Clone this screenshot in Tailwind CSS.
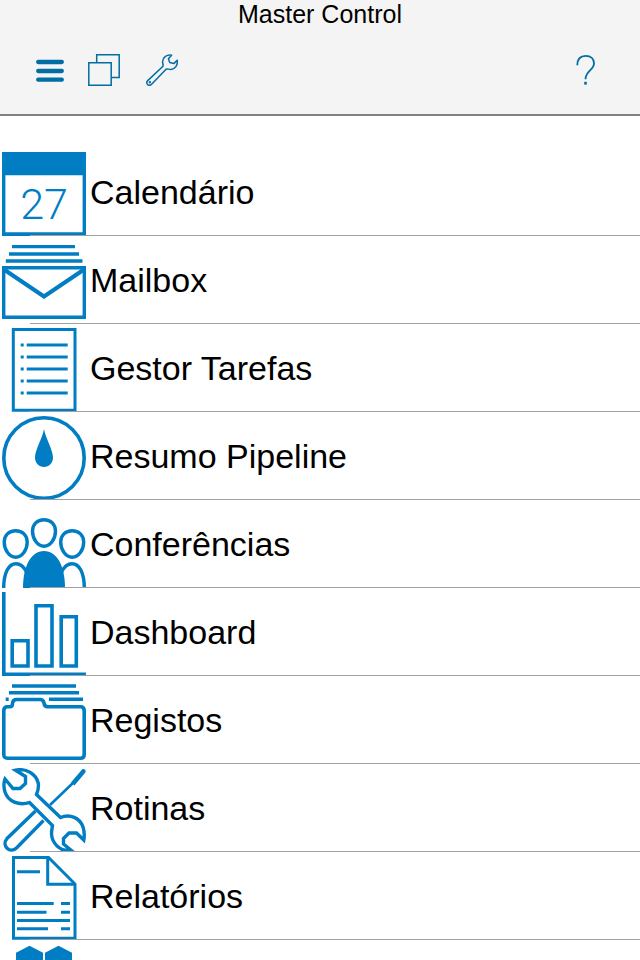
<!DOCTYPE html>
<html lang="pt">
<head>
    <meta charset="UTF-8">
    <meta name="viewport" content="width=device-width, initial-scale=1.0">
    <title>Master Control</title>
    <script src="https://cdn.jsdelivr.net/npm/@tailwindcss/browser@4"></script>
</head>
<body class="bg-white text-black font-['Liberation_Sans',Arial,sans-serif] h-screen flex flex-col overflow-hidden">
    <header class="shrink-0 bg-[#f4f4f4] border-b-2 border-[#808080]">
        <h1 class="text-center text-[25px] leading-7">Master Control</h1>
        <div class="flex items-center justify-between pt-[26px] pb-7 pl-9 pr-[38px] text-[#006da3]">
            <div class="flex items-center gap-6">
                <button type="button" aria-label="Menu">
                    <svg class="block w-7 h-8" viewBox="0 0 28 32" fill="none" stroke="currentColor" stroke-width="4.3" stroke-linecap="round">
                        <path d="M2.2 8H25.8M2.2 17H25.8M2.2 25.7H25.8"/>
                    </svg>
                </button>
                <button type="button" aria-label="Janelas">
                    <svg class="block w-8 h-8" viewBox="0 0 32 32" fill="none" stroke="currentColor" stroke-width="1.5">
                        <path d="M8.7 8.5V.8H31.2V23.5H23.5"/>
                        <path d="M.8 8.8H23.2V31.2H.8Z"/>
                    </svg>
                </button>
                <button type="button" aria-label="Ferramentas">
                    <svg class="block w-[34px] h-8" viewBox="-2 0 34 32" fill="none" stroke="currentColor" stroke-width="1.5" stroke-linejoin="round">
                        <path d="M25.6 1.2C21 .2 16.8 3.500 16.600 7.500C16.500 9.500 17.400 11 17 12.200L1.700 26.600C-.7 29.200 2.600 33 5.600 30.300L20.300 15.100C21.300 14.400 22.500 15.600 25 15.500C29 15.300 32 11.200 31.200 6.200L27.800 9.600L23.800 8.600L22.400 4.800Z"/>
                        <circle cx="3.900" cy="28.200" r=".5"/>
                    </svg>
                </button>
            </div>
            <button type="button" aria-label="Ajuda">
                <svg class="block w-8 h-8" viewBox="0 0 32 32" fill="none" stroke="currentColor" stroke-width="1.8">
                    <path d="M7.300 11.300C7.300 5 10.500 1.900 15.800 1.900C20.800 1.900 24 4.800 24 9.300C24 16.500 15.500 16.500 15.500 25.300"/>
                    <path d="M15.500 27.800V30.600" stroke-width="2.600"/>
                </svg>
            </button>
        </div>
    </header>

    <main class="flex-1 min-h-0 overflow-hidden pt-8">
        <ul class="text-[34px] leading-[40px]">
            <li class="relative after:absolute after:left-[30px] after:right-0 after:bottom-0 after:h-px after:bg-[#a0a0a0]">
                <a href="#calendario" class="flex items-center gap-1 h-[88px] pl-0.5">
                    <svg class="w-[84px] h-[84px] mt-1 text-[#007dc3]" viewBox="0 0 84 84" fill="currentColor">
                        <path fill-rule="evenodd" d="M0 0H84V84H0ZM3.400 23.300V80.300H80.600V23.300Z"/>
                        <text x="42" y="66.700" text-anchor="middle" class="font-[Roboto,sans-serif] font-light text-[43px]">27</text>
                    </svg>
                    <span>Calendário</span>
                </a>
            </li>
            <li class="relative after:absolute after:left-[30px] after:right-0 after:bottom-0 after:h-px after:bg-[#a0a0a0]">
                <a href="#mailbox" class="flex items-center gap-1 h-[88px] pl-0.5">
                    <svg class="w-[84px] h-[84px] mt-1 text-[#007dc3]" viewBox="0 0 84 84" fill="none" stroke="currentColor" stroke-width="3.400">
                        <path d="M10 6.600H73M7 14H77M3.800 21H80.500"/>
                        <path d="M1.700 27.700H82.300V77.300H1.700Z"/>
                        <path d="M2 29.500L42 56.500L82 29.500" stroke-width="4"/>
                    </svg>
                    <span>Mailbox</span>
                </a>
            </li>
            <li class="relative after:absolute after:left-[30px] after:right-0 after:bottom-0 after:h-px after:bg-[#a0a0a0]">
                <a href="#tarefas" class="flex items-center gap-1 h-[88px] pl-0.5">
                    <svg class="w-[84px] h-[84px] mt-1 text-[#007dc3]" viewBox="0 0 84 84" fill="none" stroke="currentColor" stroke-width="3">
                        <path d="M11.300 1.600H73V82.300H11.300Z"/>
                        <path d="M18.700 17H21.700M18.700 29H21.700M18.700 41H21.700M18.700 53H21.700M18.700 65H21.700"/>
                        <path d="M24.700 17H65.700M24.700 29H65.700M24.700 41H65.700M24.700 53H65.700M24.700 65H65.700"/>
                    </svg>
                    <span>Gestor Tarefas</span>
                </a>
            </li>
            <li class="relative after:absolute after:left-[30px] after:right-0 after:bottom-0 after:h-px after:bg-[#a0a0a0]">
                <a href="#pipeline" class="flex items-center gap-1 h-[88px] pl-0.5">
                    <svg class="w-[84px] h-[84px] mt-1 text-[#007dc3]" viewBox="0 0 84 84" fill="currentColor">
                        <circle cx="42" cy="42" r="40.200" fill="none" stroke="currentColor" stroke-width="3.600"/>
                        <path d="M42 13C43.500 22 51 34 51 41.500C51 47 47 51 42 51S33 47 33 41.500C33 34 40.500 22 42 13Z"/>
                    </svg>
                    <span>Resumo Pipeline</span>
                </a>
            </li>
            <li class="relative after:absolute after:left-[30px] after:right-0 after:bottom-0 after:h-px after:bg-[#a0a0a0]">
                <a href="#conferencias" class="flex items-center gap-1 h-[88px] pl-0.5">
                    <svg class="w-[84px] h-[84px] mt-1 text-[#007dc3]" viewBox="0 0 84 84" fill="none" stroke="currentColor" stroke-width="3.400">
                        <path d="M42 15.700C48.800 15.700 53.500 20.500 53.500 27C53.500 35 48.500 42.200 42 42.200S30.500 35 30.500 27C30.500 20.500 35.200 15.700 42 15.700Z"/>
                        <path d="M13.700 26.700C20.500 26.700 25.200 31.500 25.200 38C25.200 46 20.200 53.200 13.700 53.200S2.200 46 2.200 38C2.200 31.500 6.900 26.700 13.700 26.700Z"/>
                        <path d="M70.200 26.700C77 26.700 81.700 31.500 81.700 38C81.700 46 76.700 53.200 70.200 53.200S58.700 46 58.700 38C58.700 31.500 63.400 26.700 70.200 26.700Z"/>
                        <path d="M1.700 84C1.700 69 6.500 59.700 14 59.700C18.500 59.700 22 63 24.500 68"/>
                        <path d="M82.300 84C82.300 69 77.500 59.700 70 59.700C65.500 59.700 62 63 59.500 68"/>
                        <path fill="currentColor" stroke="none" d="M21 84C21 62 29 47 42 47S63 62 63 84Z"/>
                    </svg>
                    <span>Conferências</span>
                </a>
            </li>
            <li class="relative after:absolute after:left-[30px] after:right-0 after:bottom-0 after:h-px after:bg-[#a0a0a0]">
                <a href="#dashboard" class="flex items-center gap-1 h-[88px] pl-0.5">
                    <svg class="w-[84px] h-[84px] mt-1 text-[#007dc3]" viewBox="0 0 84 84" fill="none" stroke="currentColor" stroke-width="3.600">
                        <path d="M1.800 0V82.200H84"/>
                        <path d="M10.200 48.800H26V74H10.200ZM34 13.800H50V74H34ZM59.200 24.800H74.300V74H59.200Z"/>
                    </svg>
                    <span>Dashboard</span>
                </a>
            </li>
            <li class="relative after:absolute after:left-[30px] after:right-0 after:bottom-0 after:h-px after:bg-[#a0a0a0]">
                <a href="#registos" class="flex items-center gap-1 h-[88px] pl-0.5">
                    <svg class="w-[84px] h-[84px] mt-1 text-[#007dc3]" viewBox="0 0 84 84" fill="none" stroke="currentColor" stroke-width="3.600">
                        <path d="M10 6H74M7 12.800H77M3.700 19.200H6.700M47 19.200H81"/>
                        <path d="M5.500 26.700H8C10 26.700 10.500 25.500 10.500 23.500C10.700 20.500 12 19.500 14.500 19.500H38C40.500 19.500 41.500 20.500 42 23C42.300 25.500 43 26.700 45.500 26.700H78.500C81 26.700 82.200 28 82.200 30.500V74.500C82.200 77 81 78.200 78.500 78.200H5.500C3 78.200 1.800 77 1.800 74.500V30.500C1.800 28 3 26.700 5.500 26.700Z"/>
                    </svg>
                    <span>Registos</span>
                </a>
            </li>
            <li class="relative after:absolute after:left-[30px] after:right-0 after:bottom-0 after:h-px after:bg-[#a0a0a0]">
                <a href="#rotinas" class="flex items-center gap-1 h-[88px] pl-0.5">
                    <svg class="w-[84px] h-[84px] mt-1 text-[#007dc3]" viewBox="0 0 84 84" fill="none" stroke="currentColor" stroke-width="3.400">
                        <path d="M48 37L72 14" stroke-width="2.600"/>
                        <path fill="currentColor" stroke="none" d="M69 14.500L80 1.500C82 .2 84.500 2 83.300 4.500L72.500 17.500Z"/>
                        <path d="M33.500 43L5 70.500C-1 78 8 86 14.500 80L41.500 52.500"/>
                        <path d="M13.500 2.200C24 -.2 34 6 36.200 15C37 19.500 36 23 34.500 26.500L58.500 49.500C68 45.500 78 50 81 59C82.500 63.500 82.500 68 81.800 72L74.500 65H67L61.500 70.500V76L69 82.200C58 84 50 75 49.500 66C49.500 63 50 60.500 50.500 57.500L27.500 34.500C17 38 6 33.500 3 24C1.500 19 1.500 15 3 11L11 20.500H18L23.500 15.500V8.500Z"/>
                    </svg>
                    <span>Rotinas</span>
                </a>
            </li>
            <li class="relative after:absolute after:left-[30px] after:right-0 after:bottom-0 after:h-px after:bg-[#a0a0a0]">
                <a href="#relatorios" class="flex items-center gap-1 h-[88px] pl-0.5">
                    <svg class="w-[84px] h-[84px] mt-1 text-[#007dc3]" viewBox="0 0 84 84" fill="none" stroke="currentColor" stroke-width="3">
                        <path d="M11.500 1.500H46.500L73 28V82.300H11.500Z"/>
                        <path d="M45.700 1.500V28.200H73"/>
                        <path d="M15 15.800H38M15 47.500H51.700M59 47.500H68M15 56.200H44.500M59 56.200H68M15 64.500H68M15 72.700H46M59 72.700H68"/>
                    </svg>
                    <span>Relatórios</span>
                </a>
            </li>
            <li>
                <a href="#mais" class="flex items-center h-[88px] pl-0.5">
                    <svg class="w-[84px] h-[84px] mt-1 text-[#007dc3]" viewBox="0 0 84 84" fill="currentColor">
                        <path d="M27.500 1.700L41 8.700V25L27.500 32L14 25V8.700ZM56.500 1.700L70 8.700V25L56.500 32L43 25V8.700Z"/>
                    </svg>
                </a>
            </li>
        </ul>
    </main>
</body>
</html>
